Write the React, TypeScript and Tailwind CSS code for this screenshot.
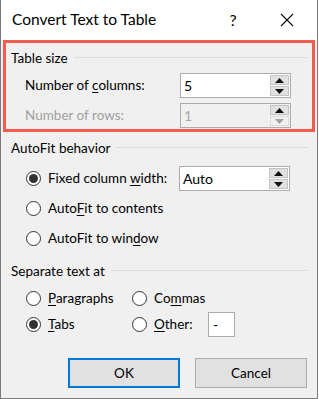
import React from 'react';

const font = { fontFamily: 'Lato, "Noto Sans", Arial, sans-serif' };

const Arrow = ({ up, dim }: { up?: boolean; dim?: boolean }) => (
  <svg width="9" height="5" viewBox="0 0 9 5">
    <path d={up ? 'M0 5 L4.5 0 L9 5 Z' : 'M0 0 L4.5 5 L9 0 Z'} fill={dim ? '#a0a0a0' : '#111'} />
  </svg>
);

const Spin = ({ value, disabled }: { value: string; disabled?: boolean }) => (
  <div
    className={`flex w-[111px] h-[25px] border border-[#acacac] ${disabled ? 'bg-[#f0f0f0]' : 'bg-white'}`}
  >
    <div className={`flex-1 flex items-center pl-[3px] text-[14px] ${disabled ? 'text-[#a8a8a8]' : 'text-black'}`}>
      {value}
    </div>
    <div className="flex flex-col w-[20px] gap-[1px] py-[1px] pr-[1px]">
      <div className="flex-1 flex items-center justify-center bg-[#e1e1e1] border border-[#c4c4c4]">
        <Arrow up />
      </div>
      <div className={`flex-1 flex items-center justify-center border ${disabled ? 'bg-[#f0f0f0] border-[#dcdcdc]' : 'bg-[#e1e1e1] border-[#c4c4c4]'}`}>
        <Arrow dim={disabled} />
      </div>
    </div>
  </div>
);

const Radio = ({ checked }: { checked?: boolean }) => (
  <div className="w-[15px] h-[15px] rounded-full border border-[#333] bg-white flex items-center justify-center shrink-0">
    {checked && <div className="w-[9px] h-[9px] rounded-full bg-[#333]" />}
  </div>
);

const Group = ({ title }: { title: string }) => (
  <div className="flex items-center h-[20px]">
    <span className="text-[13.5px] pr-[6px]">{title}</span>
    <div className="flex-1 h-px bg-[#dcdcdc] mt-[-2px]" />
  </div>
);

const U = ({ children }: { children: React.ReactNode }) => <span className="underline underline-offset-2">{children}</span>;

export default function App() {
  return (
    <div className="w-[319px] h-[399px] bg-white text-[#000]" style={font}>
      <div className="w-[318px] h-[399px] border-x border-b border-[#7a7a7a] flex flex-col bg-[#f0f0f0]">
        {/* title bar */}
        <div className="h-[40px] bg-white flex items-center pl-[11px] shrink-0">
          <span className="text-[15.5px] flex-1">Convert Text to Table</span>
          <span className="text-[16px] w-[20px] text-center mr-[37px]">?</span>
          <svg width="14" height="14" viewBox="0 0 14 14" className="mr-[23px]">
            <path d="M1 1 L13 13 M13 1 L1 13" stroke="#111" strokeWidth="1.2" />
          </svg>
        </div>

        {/* Table size (highlighted) */}
        <div className="mx-[2px] border-[3px] border-[#f55a4e] h-[92px] pl-[5px] pr-[4px] pt-[5px]">
          <Group title="Table size" />
          <div className="flex items-center h-[25px] mt-[5px]">
            <span className="text-[13.5px] pl-[14px] w-[169px]">
              Number of <U>c</U>olumns:
            </span>
            <Spin value="5" />
          </div>
          <div className="flex items-center h-[25px] mt-[5px]">
            <span className="text-[13.5px] pl-[14px] w-[169px] text-[#a0a0a0]">Number of rows:</span>
            <Spin value="1" disabled />
          </div>
        </div>

        {/* AutoFit */}
        <div className="pl-[10px] pr-[9px] mt-[6px]">
          <Group title="AutoFit behavior" />
          <div className="flex items-center h-[25px] mt-[8px]">
            <div className="flex items-center gap-[7px] pl-[15px] w-[168px] whitespace-nowrap">
              <Radio checked />
              <span className="text-[13.5px]">
                Fixed column <U>w</U>idth:
              </span>
            </div>
            <Spin value="Auto" />
          </div>
          <div className="flex items-center gap-[7px] pl-[15px] h-[20px] mt-[7px]">
            <Radio />
            <span className="text-[13.5px]">
              Auto<U>F</U>it to contents
            </span>
          </div>
          <div className="flex items-center gap-[7px] pl-[15px] h-[20px] mt-[10px]">
            <Radio />
            <span className="text-[13.5px]">
              AutoFit to win<U>d</U>ow
            </span>
          </div>
        </div>

        {/* Separate text */}
        <div className="pl-[10px] pr-[9px] mt-[13px]">
          <Group title="Separate text at" />
          <div className="flex items-center h-[20px] mt-[7px] pl-[15px]">
            <div className="flex items-center gap-[7px] w-[106px]">
              <Radio />
              <span className="text-[13.5px]">
                <U>P</U>aragraphs
              </span>
            </div>
            <div className="flex items-center gap-[7px]">
              <Radio />
              <span className="text-[13.5px]">
                Co<U>m</U>mas
              </span>
            </div>
          </div>
          <div className="flex items-center h-[25px] mt-[4px] pl-[15px]">
            <div className="flex items-center gap-[7px] w-[106px]">
              <Radio checked />
              <span className="text-[13.5px]">
                <U>T</U>abs
              </span>
            </div>
            <div className="flex items-center gap-[7px] w-[76px]">
              <Radio />
              <span className="text-[13.5px]">
                <U>O</U>ther:
              </span>
            </div>
            <div className="w-[27px] h-[25px] border border-[#acacac] bg-white text-[14px] pl-[4px] flex items-center">
              -
            </div>
          </div>
        </div>

        {/* Buttons */}
        <div className="flex justify-end gap-[15px] pr-[10px] mt-[21px]">
          <button className="w-[112px] h-[30px] bg-[#e1e1e1] border-2 border-[#0078d7] text-[13.5px]">OK</button>
          <button className="w-[112px] h-[30px] bg-[#e1e1e1] border border-[#adadad] text-[13.5px]">Cancel</button>
        </div>
      </div>
    </div>
  );
}
